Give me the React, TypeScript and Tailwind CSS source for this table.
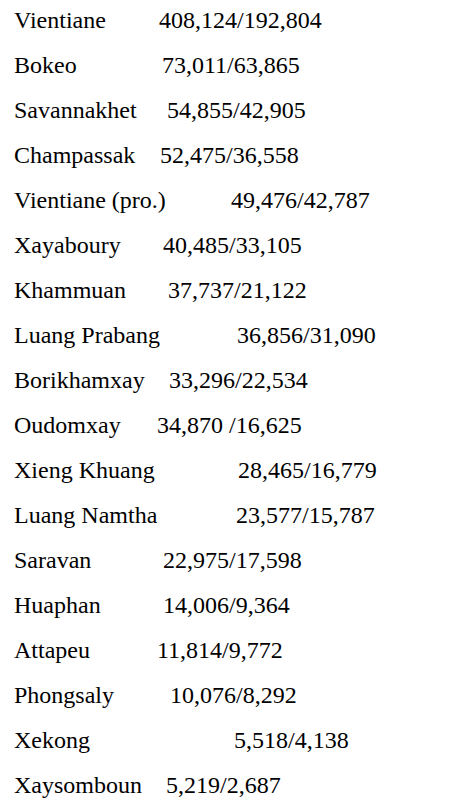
const rows = [
  { name: 'Vientiane', value: '408,124/192,804', cols: 'grid-cols-[145px_1fr]' },
  { name: 'Bokeo', value: '73,011/63,865', cols: 'grid-cols-[148px_1fr]' },
  { name: 'Savannakhet', value: '54,855/42,905', cols: 'grid-cols-[153px_1fr]' },
  { name: 'Champassak', value: '52,475/36,558', cols: 'grid-cols-[146px_1fr]' },
  { name: 'Vientiane (pro.)', value: '49,476/42,787', cols: 'grid-cols-[217px_1fr]' },
  { name: 'Xayaboury', value: '40,485/33,105', cols: 'grid-cols-[149px_1fr]' },
  { name: 'Khammuan', value: '37,737/21,122', cols: 'grid-cols-[154px_1fr]' },
  { name: 'Luang Prabang', value: '36,856/31,090', cols: 'grid-cols-[223px_1fr]' },
  { name: 'Borikhamxay', value: '33,296/22,534', cols: 'grid-cols-[155px_1fr]' },
  { name: 'Oudomxay', value: '34,870 /16,625', cols: 'grid-cols-[143px_1fr]' },
  { name: 'Xieng Khuang', value: '28,465/16,779', cols: 'grid-cols-[224px_1fr]' },
  { name: 'Luang Namtha', value: '23,577/15,787', cols: 'grid-cols-[222px_1fr]' },
  { name: 'Saravan', value: '22,975/17,598', cols: 'grid-cols-[149px_1fr]' },
  { name: 'Huaphan', value: '14,006/9,364', cols: 'grid-cols-[149px_1fr]' },
  { name: 'Attapeu', value: '11,814/9,772', cols: 'grid-cols-[143px_1fr]' },
  { name: 'Phongsaly', value: '10,076/8,292', cols: 'grid-cols-[156px_1fr]' },
  { name: 'Xekong', value: '5,518/4,138', cols: 'grid-cols-[220px_1fr]' },
  { name: 'Xaysomboun', value: '5,219/2,687', cols: 'grid-cols-[152px_1fr]' },
];

export default function App() {
  return (
    <div className="min-h-screen w-[464px] bg-white text-black font-[family-name:Liberation_Serif,Times_New_Roman,serif]">
      {/* Province list */}
      <div className="flex flex-col gap-[5px] pl-[14px]">
        {rows.map((row) => (
          <div key={row.name} className={`grid ${row.cols} text-[24px] leading-[40px] whitespace-pre`}>
            <span>{row.name}</span>
            <span>{row.value}</span>
          </div>
        ))}
      </div>
    </div>
  );
}
